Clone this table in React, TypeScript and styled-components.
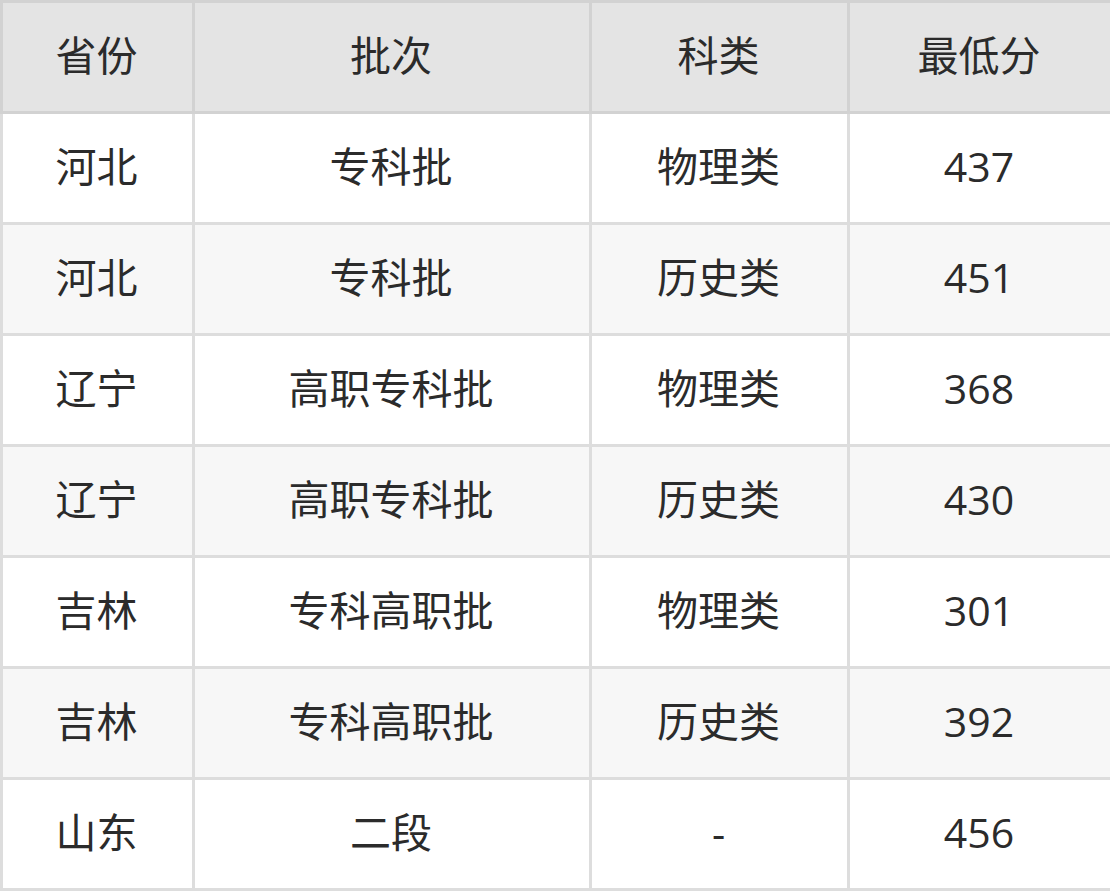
import React from "react";
import styled, { createGlobalStyle } from "styled-components";

const Global = createGlobalStyle`
  html, body { margin: 0; padding: 0; background: #ffffff; }
  body { font-family: "Open Sans", "Noto Sans CJK SC", sans-serif; }
`;

const Table = styled.table`
  border-collapse: collapse;
  width: 1110px;
  table-layout: fixed;
  font-family: "Open Sans", "Noto Sans CJK SC", sans-serif;
  font-size: 41px;
  line-height: 1.2;
  color: #2b2b2b;
`;

const HeadCell = styled.th`
  height: 106px;
  padding: 0 2px 2px 0;
  background: #e4e4e4;
  border: 3px solid #d2d2d2;
  font-weight: 400;
  text-align: center;
  vertical-align: middle;
`;

const Row = styled.tr<{ $alt: boolean }>`
  background: ${(p) => (p.$alt ? "#f7f7f7" : "#ffffff")};
`;

const Cell = styled.td`
  height: 106px;
  padding: 0 2px 2px 0;
  border: 3px solid #dddddd;
  text-align: center;
  vertical-align: middle;
`;

const widths = [192, 397, 258, 263];
const headers = ["省份", "批次", "科类", "最低分"];
const rows = [
  ["河北", "专科批", "物理类", "437"],
  ["河北", "专科批", "历史类", "451"],
  ["辽宁", "高职专科批", "物理类", "368"],
  ["辽宁", "高职专科批", "历史类", "430"],
  ["吉林", "专科高职批", "物理类", "301"],
  ["吉林", "专科高职批", "历史类", "392"],
  ["山东", "二段", "-", "456"],
];

export default function App() {
  return (
    <>
      <Global />
      <Table>
        <colgroup>
          {widths.map((w, i) => (
            <col key={i} style={{ width: w }} />
          ))}
        </colgroup>
        <thead>
          <tr>
            {headers.map((h) => (
              <HeadCell key={h}>{h}</HeadCell>
            ))}
          </tr>
        </thead>
        <tbody>
          {rows.map((r, i) => (
            <Row key={i} $alt={i % 2 === 1}>
              {r.map((c, j) => (
                <Cell key={j}>{c}</Cell>
              ))}
            </Row>
          ))}
        </tbody>
      </Table>
    </>
  );
}
